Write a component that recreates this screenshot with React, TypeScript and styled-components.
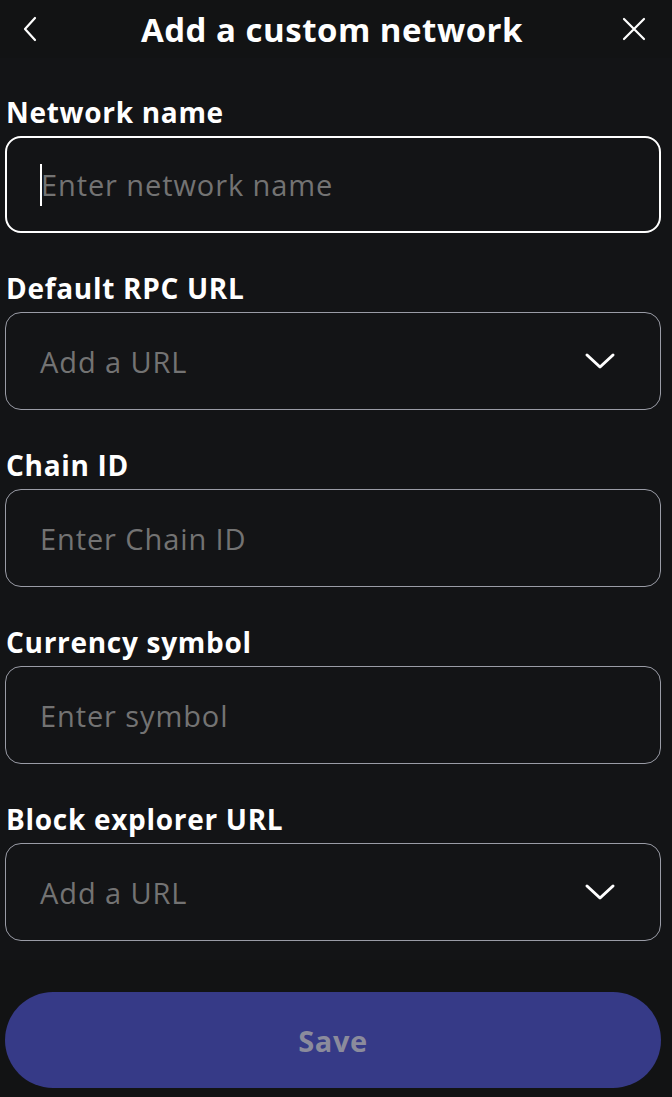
import React from "react";
import styled, { createGlobalStyle } from "styled-components";

const Global = createGlobalStyle`
  html, body { margin: 0; padding: 0; background: #121314; }
  body { font-family: "Open Sans", Lato, sans-serif; color: #ffffff; }
  * { box-sizing: border-box; }
`;

const Page = styled.div`
  width: 672px;
  height: 1097px;
  display: flex;
  flex-direction: column;
  background: #121314;
`;

const Header = styled.header`
  height: 58px;
  display: flex;
  align-items: center;
  justify-content: space-between;
  padding: 0 20px 0 12px;
`;

const IconButton = styled.button`
  width: 36px;
  height: 36px;
  border: none;
  background: transparent;
  padding: 0;
  display: flex;
  align-items: center;
  justify-content: center;
  color: #ffffff;
  cursor: pointer;
`;

const Title = styled.h1`
  margin: 0;
  font-size: 33px;
  font-weight: 700;
  letter-spacing: 0.5px;
  color: #ffffff;
`;

const Form = styled.div`
  flex: 0 0 auto;
  height: 902px;
  padding: 34px 11px 0 5px;
  display: flex;
  flex-direction: column;
  gap: 35px;
  background: #131416;
`;

const Field = styled.div`
  display: flex;
  flex-direction: column;
  gap: 4px;
`;

const Label = styled.label`
  font-size: 28px;
  font-weight: 700;
  line-height: 40px;
  letter-spacing: 0.7px;
  padding-left: 1px;
  color: #ffffff;
`;

const Box = styled.div<{ $focused?: boolean }>`
  height: ${(p) => (p.$focused ? 97 : 98)}px;
  border: ${(p) => (p.$focused ? "2px solid #ffffff" : "1.5px solid #9a9ca6")};
  border-radius: 16px;
  display: flex;
  align-items: center;
  padding: 0 44px 0 34px;
  position: relative;
`;

const Placeholder = styled.span`
  flex: 1;
  font-size: 29px;
  font-weight: 400;
  letter-spacing: 0.9px;
  color: #737373;
`;

const Caret = styled.span`
  position: absolute;
  left: 33px;
  top: 26px;
  width: 2px;
  height: 42px;
  background: #ffffff;
`;

const Footer = styled.div`
  flex: 1;
  padding: 32px 11px 0 5px;
  background: #121314;
`;

const SaveButton = styled.button`
  width: 100%;
  height: 96px;
  border: none;
  border-radius: 48px;
  background: #363a87;
  color: #8b8b9c;
  font-family: "Open Sans", Lato, sans-serif;
  font-size: 29px;
  font-weight: 700;
  letter-spacing: 0.6px;
  cursor: not-allowed;
`;

const Chevron = () => (
  <svg width="32" height="20" viewBox="0 0 32 20" fill="none">
    <path d="M3 4 L16 16 L29 4" stroke="#ffffff" strokeWidth="3" strokeLinecap="round" strokeLinejoin="round" />
  </svg>
);

const fields: { label: string; placeholder: string; select?: boolean; focused?: boolean }[] = [
  { label: "Network name", placeholder: "Enter network name", focused: true },
  { label: "Default RPC URL", placeholder: "Add a URL", select: true },
  { label: "Chain ID", placeholder: "Enter Chain ID" },
  { label: "Currency symbol", placeholder: "Enter symbol" },
  { label: "Block explorer URL", placeholder: "Add a URL", select: true },
];

export default function App() {
  return (
    <Page>
      <Global />
      <Header>
        <IconButton aria-label="Back">
          <svg width="20" height="28" viewBox="0 0 20 28" fill="none">
            <path d="M15 3 L5 14 L15 25" stroke="#ffffff" strokeWidth="2.2" strokeLinecap="round" strokeLinejoin="round" />
          </svg>
        </IconButton>
        <Title>Add a custom network</Title>
        <IconButton aria-label="Close">
          <svg width="26" height="26" viewBox="0 0 26 26" fill="none">
            <path d="M3 3 L23 23 M23 3 L3 23" stroke="#ffffff" strokeWidth="2.2" strokeLinecap="round" />
          </svg>
        </IconButton>
      </Header>
      <Form>
        {fields.map((f) => (
          <Field key={f.label}>
            <Label>{f.label}</Label>
            <Box $focused={f.focused}>
              {f.focused && <Caret />}
              <Placeholder>{f.placeholder}</Placeholder>
              {f.select && <Chevron />}
            </Box>
          </Field>
        ))}
      </Form>
      <Footer>
        <SaveButton disabled>Save</SaveButton>
      </Footer>
    </Page>
  );
}
